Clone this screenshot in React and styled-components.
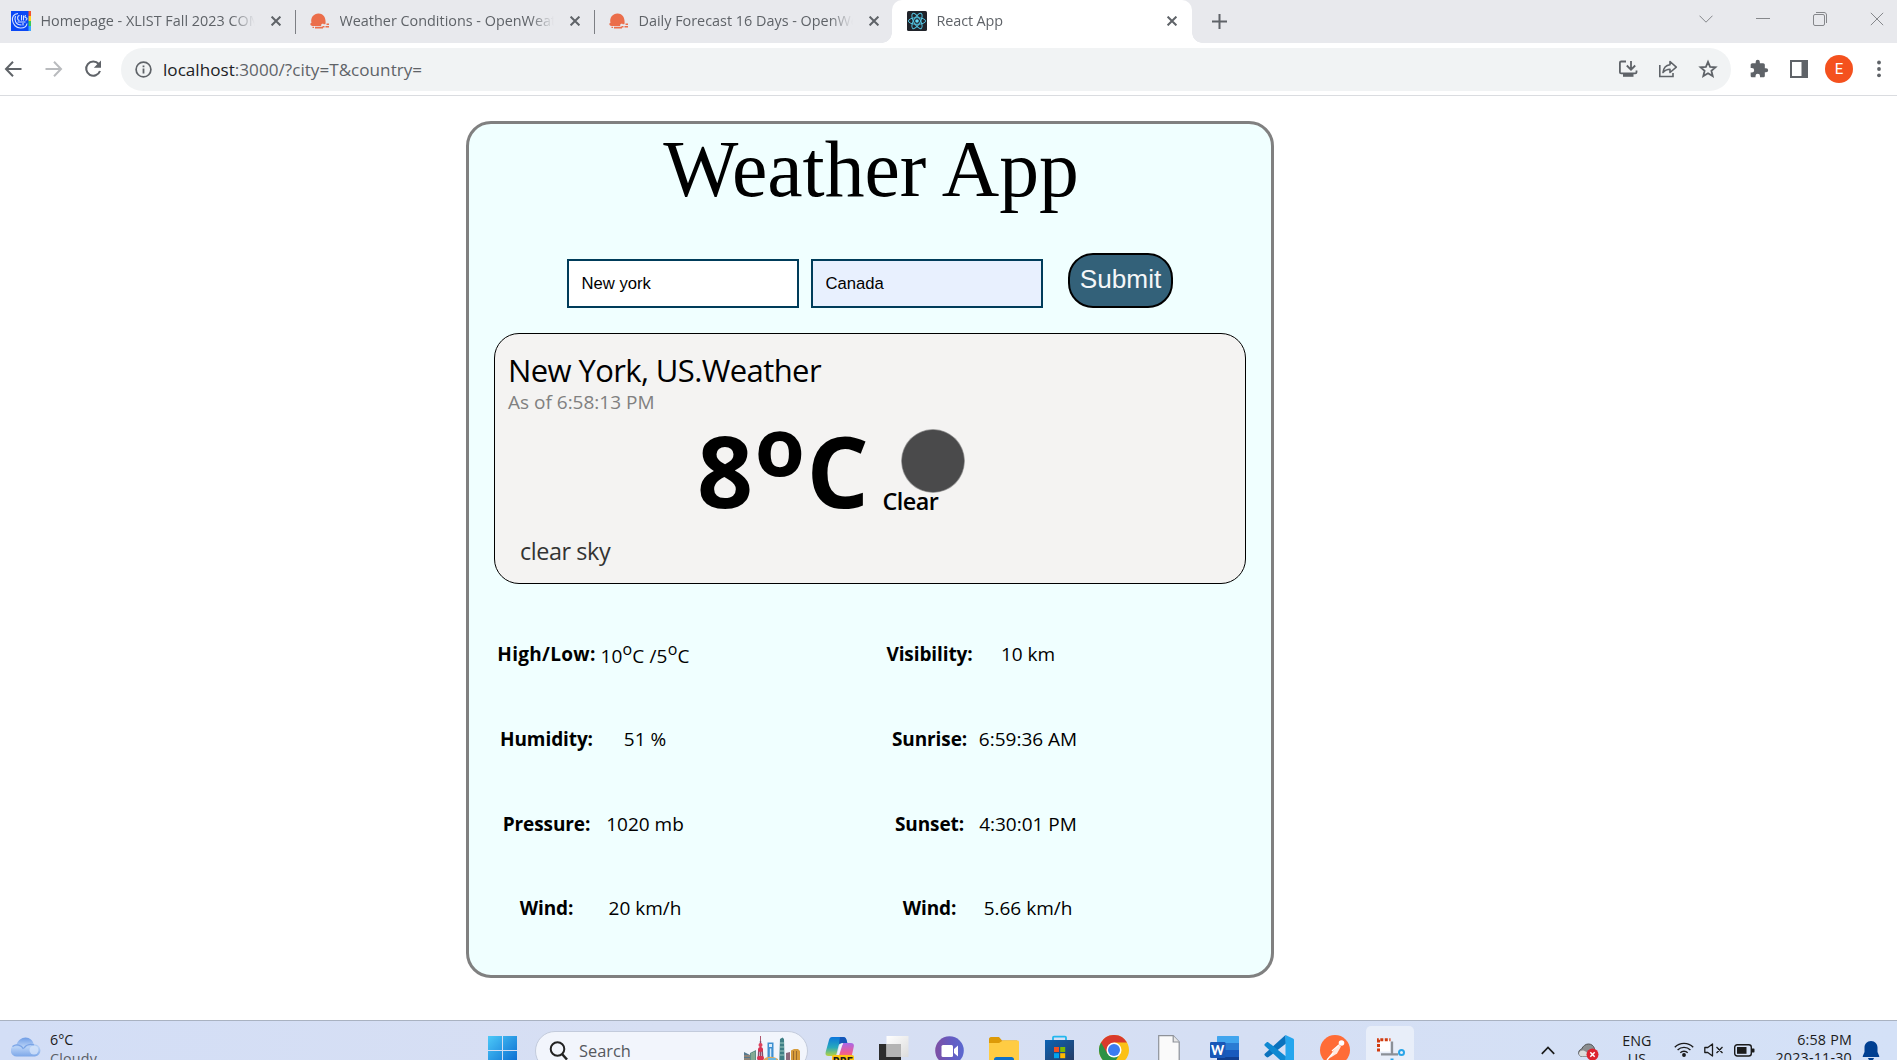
import React from "react";
import styled, { createGlobalStyle } from "styled-components";

const GlobalStyle = createGlobalStyle`
  *, *::before, *::after { box-sizing: border-box; }
  html, body { margin: 0; padding: 0; background: #fff; overflow: hidden; }
  svg { display: block; flex: none; }
`;

const ui = `"Open Sans", "Noto Sans", sans-serif`;

const Screen = styled.div`
  display: flex;
  flex-direction: column;
  width: 1897px;
  height: 1060px;
  overflow: hidden;
  background: #fff;
  font-family: ${ui};
`;

/* ---------- browser chrome ---------- */

const TabStrip = styled.div`
  display: flex;
  height: 43px;
  flex: none;
  background: #e8e9ed;
`;

const Tab = styled.div`
  position: relative;
  display: flex;
  align-items: center;
  width: ${(p) => p.$width}px;
  height: 43px;
  padding: 0 0 2px ${(p) => p.$inset}px;
  background: ${(p) => (p.$active ? "#fff" : "transparent")};
  border-radius: ${(p) => (p.$active ? "10px 10px 0 0" : "0")};
  &::before, &::after {
    content: ${(p) => (p.$active ? '""' : "none")};
    position: absolute;
    bottom: 0;
    width: 10px;
    height: 10px;
  }
  &::before { left: -10px; background: radial-gradient(circle at 0 0, transparent 9.5px, #fff 10px); }
  &::after { right: -10px; background: radial-gradient(circle at 100% 0, transparent 9.5px, #fff 10px); }
`;

const TabTitle = styled.span`
  width: 215px;
  margin-left: 9.5px;
  overflow: hidden;
  white-space: nowrap;
  font-size: 14.4px;
  letter-spacing: ${(p) => p.$track || 0}px;
  line-height: 22px;
  color: #5f6368;
  -webkit-mask-image: linear-gradient(to right, #000 190px, transparent 214px);
  mask-image: linear-gradient(to right, #000 190px, transparent 214px);
`;

const TabClose = styled.span`
  display: flex;
  margin-left: ${(p) => p.$gap || 15}px;
`;

const Separator = styled.i`
  width: 1px;
  height: 24px;
  margin-top: 10px;
  background: #7d7f84;
`;

const NewTab = styled.div`
  display: flex;
  align-items: center;
  height: 42px;
  margin-left: 20px;
`;

const WindowControls = styled.div`
  display: flex;
  align-items: center;
  gap: 43px;
  height: 37px;
  margin-left: auto;
  padding-right: 13px;
`;

const Toolbar = styled.div`
  display: flex;
  align-items: center;
  flex: none;
  height: 53px;
  border-bottom: 1px solid #dadce0;
`;

const NavButtons = styled.div`
  display: flex;
  gap: 19px;
  width: 121px;
  padding-left: 3px;
`;

const Omnibox = styled.div`
  display: flex;
  align-items: center;
  width: 1610px;
  height: 43px;
  padding: 0 13px 0 13px;
  border-radius: 22px;
  background: #f1f3f4;
`;

const Url = styled.span`
  margin-left: 10px;
  font-size: 17.1px;
  letter-spacing: 0.02px;
  color: #5f6368;
  b { font-weight: 400; color: #202124; }
`;

const OmniActions = styled.div`
  display: flex;
  align-items: center;
  gap: 20px;
  margin-left: auto;
`;

const Extensions = styled.div`
  display: flex;
  align-items: center;
  margin-left: 18px;
`;

const Avatar = styled.span`
  width: 28px;
  height: 28px;
  margin: 0 24px 0 17px;
  border-radius: 50%;
  background: #f4511e;
  color: #fff;
  font: 15px/28px Roboto, sans-serif;
  text-align: center;
`;

/* ---------- weather page ---------- */

const Page = styled.main`
  height: 924px;
  flex: none;
  padding: 25px 0 0 466px;
`;

const Card = styled.section`
  display: flex;
  flex-direction: column;
  align-items: center;
  width: 808px;
  height: 857px;
  border: 3px solid #808080;
  border-radius: 25px;
  background: #f0ffff;
`;

const Title = styled.h1`
  margin: 0;
  padding-left: 2px;
  font: 400 79.6px/90px "Liberation Serif", "Times New Roman", serif;
  color: #000;
`;

const Form = styled.form`
  display: flex;
  align-items: flex-end;
  gap: 12px;
  margin: 39px 0 25px;
`;

const Field = styled.input`
  width: 232px;
  height: 49px;
  padding: 0 12.5px;
  border: 2px solid #003c5a;
  border-radius: 0;
  outline: none;
  background: ${(p) => (p.$filled ? "#e8f0fe" : "#fff")};
  color: #000;
  font: 16.67px "Liberation Sans", Arial, sans-serif;
`;

const Submit = styled.button`
  width: 105px;
  height: 55px;
  margin-left: 13px;
  padding: 0 0 2px;
  border: 2px solid #000;
  border-radius: 25px;
  background: #336179;
  color: #f4f6f8;
  font: 26.2px/49px "Liberation Sans", Arial, sans-serif;
`;

const Panel = styled.div`
  display: flex;
  flex-direction: column;
  width: 752px;
  height: 251px;
  padding: 16px 13px 0;
  border: 1px solid #000;
  border-radius: 25px;
  background: #f4f3f2;
`;

const Place = styled.div`
  font-size: 31px;
  line-height: 40px;
  letter-spacing: -0.6px;
  color: #000;
`;

const AsOf = styled.div`
  font-size: 19px;
  line-height: 24px;
  color: #808080;
`;

const Current = styled.div`
  display: flex;
  height: 100px;
  margin: 6px 0 16px 189px;
`;

const Temperature = styled.div`
  font-size: 98px;
  font-weight: 700;
  line-height: 100px;
  letter-spacing: 1.6px;
  color: #000;
  white-space: nowrap;
  sup {
    font-size: 81px;
    line-height: 0;
    vertical-align: 32px;
  }
`;

const Condition = styled.div`
  margin-left: 12px;
  padding-top: 9px;
  font-size: 23.4px;
  font-weight: 600;
  line-height: 18px;
  letter-spacing: -0.5px;
  color: #000;
`;

const Moon = styled.div`
  width: 64px;
  height: 64px;
  margin: 0 0 -1px 19px;
  border-radius: 50%;
  background: radial-gradient(circle, #4a4a4b 30.5px, rgba(74, 74, 75, 0.3) 32px);
`;

const Summary = styled.div`
  margin-left: 12px;
  font-size: 23.4px;
  line-height: 30px;
  letter-spacing: -0.42px;
  color: #333;
`;

const Details = styled.dl`
  display: grid;
  grid-template-columns: 98px 98px 187px 98px 98px;
  grid-template-rows: repeat(4, 84.7px);
  align-items: center;
  justify-items: center;
  width: 746px;
  margin: 28px 0 0;
  padding-left: 0.5px;
  font-size: 19px;
  line-height: 24px;
  color: #000;
  white-space: nowrap;
`;

const Label = styled.dt`
  grid-column: ${(p) => p.$col};
  font-weight: 700;
  letter-spacing: ${(p) => (p.$wide ? 0.3 : -0.1)}px;
`;

const Value = styled.dd`
  grid-column: ${(p) => p.$col};
  margin: ${(p) => (p.$low ? "3px 0 0 1px" : "0 0 0 1px")};
  letter-spacing: ${(p) => (p.$low ? 0.15 : 0)}px;
  sup {
    font-size: 16px;
    line-height: 0;
    vertical-align: 8px;
  }
`;

/* ---------- taskbar ---------- */

const Taskbar = styled.footer`
  display: flex;
  flex: none;
  height: 60px;
  border-top: 1px solid #a9b2c1;
  background: linear-gradient(to right, #d3def6, #d7dff3 35%, #d5dff4 65%, #d4e1f7);
`;

const Weather = styled.div`
  display: flex;
  width: 488px;
  padding: 15px 0 0 11px;
`;

const WeatherText = styled.div`
  margin: -5px 0 0 9px;
  font-size: 14.3px;
  line-height: 18px;
  color: #1b1b1b;
  span { display: block; margin-top: 1px; color: #5b5f66; letter-spacing: 0.2px; }
`;

const StartButton = styled.div`
  width: 47px;
  padding-top: 15px;
`;

const SearchBox = styled.div`
  display: flex;
  width: 273px;
  height: 40px;
  margin-top: 10px;
  padding-left: 13px;
  border: 1px solid #c3cbdc;
  border-radius: 20px;
  background: #f2f5fc;
  color: #55585e;
  font-size: 16.4px;
  line-height: 38px;
  svg:first-child { margin-top: 9px; }
  span { width: 165px; margin-left: 11px; }
  svg:last-child { margin-top: 4px; }
`;

const Apps = styled.div`
  display: flex;
  gap: 25.4px;
  margin-left: 17px;
  padding-top: 14px;
`;

const ActiveApp = styled.div`
  width: 48px;
  height: 48px;
  margin: -9px 0 0 -9px;
  padding: 11px 0 0 11px;
  border-radius: 5px;
  background: #e8eef9;
`;

const Tray = styled.div`
  display: flex;
  margin-left: auto;
  padding: 14px 17px 0 0;
`;

const TrayItem = styled.div`
  margin: ${(p) => p.$top || 0}px 0 0 ${(p) => p.$gap || 0}px;
`;

const TrayText = styled.div`
  margin: ${(p) => p.$top}px 0 0 ${(p) => p.$gap}px;
  font-size: 14.3px;
  line-height: 18px;
  text-align: ${(p) => p.$align || "center"};
  letter-spacing: ${(p) => p.$track || 0}px;
  white-space: nowrap;
  color: #1b1b1b;
`;

/* ---------- icons ---------- */

const Cross = ({ size = 10, width = 2, color = "#5f6368" }) => (
  <svg width={size} height={size} viewBox="0 0 10 10" stroke={color} strokeWidth={(width * 10) / size}>
    <path d="M.6.6l8.8 8.8M9.4.6L.6 9.4" />
  </svg>
);

const CollegeIcon = () => (
  <svg width="20" height="20" viewBox="0 0 20 20">
    <rect width="20" height="20" fill="#0a47f5" />
    <rect x="17.5" width="2.5" height="5" fill="#f2542d" />
    <rect x="17.5" y="5" width="2.5" height="5" fill="#ffd21f" />
    <rect x="17.5" y="10" width="2.5" height="5" fill="#36c95b" />
    <rect x="17.5" y="15" width="2.5" height="5" fill="#38a8ff" />
    <g fill="none" stroke="#d8e4ff" strokeWidth="1.1">
      <path d="M7 2.500C2.500 3 1 6 1.500 9.500S5 17.500 10 17c3 0 5.500-1.500 6-4.500" />
      <path d="M4.500 5c-1.500 4 0 9 6 9M8.500 4.500c-2.500 0-2.500 5 0 5M10.500 4v5.500M12.500 4.500v5M15 4.500c-1.500 0-1.500 2 0 2.200s1.200 2.500-.5 2.500M6.500 11h8M12 12v2.500" />
    </g>
  </svg>
);

const OpenWeatherIcon = () => (
  <svg width="20" height="20" viewBox="0 0 20 20" fill="#eb6e4b">
    <path d="M8.500 2.500a7.200 7.200 0 0 0-7 9.300C.6 12 .2 12.800.4 13.600c.2.900 1 1.400 2 1.400h8.800v-1.700h4.200c.8-4-.4-10.800-6.900-10.800z" />
    <path d="M5 15.800h8v1.700H5zM12.500 15h2v1.500h-2zM15.500 15h3.500v1.600h-3.500zM16.500 12.500H19V14h-2.500zM2.500 15.800H4V17H2.500z" />
    <path d="M12 12.800h1.500v1.200H12zM14.300 13.800h1.400V15h-1.400z" fill="#e8e9ed" />
  </svg>
);

const ReactIcon = () => (
  <svg width="20" height="20" viewBox="0 0 20 20">
    <rect width="20" height="20" rx="1.500" fill="#20232a" />
    <g fill="none" stroke="#53c1de" strokeWidth="1">
      <ellipse cx="10" cy="10" rx="8.600" ry="3.300" />
      <ellipse cx="10" cy="10" rx="8.600" ry="3.300" transform="rotate(60 10 10)" />
      <ellipse cx="10" cy="10" rx="8.600" ry="3.300" transform="rotate(120 10 10)" />
    </g>
    <circle cx="10" cy="10" r="1.800" fill="#61dafb" />
  </svg>
);

const Arrow = ({ color, flip }) => (
  <svg width="21" height="20" viewBox="0 0 21 20" fill="none" stroke={color} strokeWidth="2">
    <path d={flip ? "M2.500 10h15M11 2.800L18 10l-7 7.200" : "M18.500 10h-15M10 2.800L3 10l7 7.200"} />
  </svg>
);

const Reload = () => (
  <svg width="20" height="20" viewBox="0 0 20 20">
    <path d="M15.700 5A7.100 7.100 0 1 0 17 12" fill="none" stroke="#5f6368" strokeWidth="2.100" />
    <path d="M18 1.500v7.200h-7.200z" fill="#5f6368" />
  </svg>
);

const Info = () => (
  <svg width="19" height="19" viewBox="0 0 19 19">
    <circle cx="9.500" cy="9.500" r="7.400" fill="none" stroke="#5f6368" strokeWidth="1.700" />
    <path d="M8.600 8.600h1.800v4.800H8.600zM8.600 5.500h1.800v1.800H8.600z" fill="#5f6368" />
  </svg>
);

const Install = () => (
  <svg width="20" height="20" viewBox="0 0 20 20" fill="none" stroke="#5f6368" strokeWidth="1.800">
    <path d="M8 2.500H3.200c-.8 0-1.300.5-1.300 1.300v9.400c0 .7.500 1.200 1.300 1.200h14c.8 0 1.300-.5 1.300-1.200v-1.700M13 2v8M8.800 6.500L13 10.700l4.200-4.200" />
    <path d="M5 16.300h10.500" strokeWidth="3" />
  </svg>
);

const Share = () => (
  <svg width="20" height="20" viewBox="0 0 20 20" fill="none" stroke="#5f6368" strokeWidth="1.600">
    <path d="M1.800 6v11.500H15V14" />
    <path d="M5 13.500C5.500 9 8 6.300 12 5.800V2.500l6.300 5.700L12 13.500v-3.300c-3 0-5.200 1-7 3.300z" strokeLinejoin="round" />
  </svg>
);

const Star = () => (
  <svg width="20" height="20" viewBox="0 0 20 20" fill="none" stroke="#5f6368" strokeWidth="1.800">
    <path d="M10 2.800l2.100 5 5.400.5-4.100 3.500 1.300 5.300L10 14.300l-4.700 2.800 1.300-5.300-4.100-3.500 5.400-.5z" />
  </svg>
);

const Puzzle = () => (
  <svg width="20" height="20" viewBox="0 0 24 24" fill="#5f6368">
    <path d="M20.500 11H19V7c0-1.100-.9-2-2-2h-4V3.500a2.500 2.500 0 0 0-5 0V5H4c-1.100 0-2 .9-2 2v3.800h1.500a2.700 2.700 0 0 1 0 5.400H2V20c0 1.100.9 2 2 2h3.800v-1.500a2.700 2.700 0 0 1 5.400 0V22H17c1.100 0 2-.9 2-2v-4h1.500a2.500 2.500 0 0 0 0-5z" />
  </svg>
);

const SidePanel = () => (
  <svg width="18" height="18" viewBox="0 0 18 18">
    <rect x="1" y="1" width="16" height="16" fill="#fff" stroke="#5f6368" strokeWidth="2" />
    <path d="M11.500 1H17v16h-5.500z" fill="#5f6368" />
  </svg>
);

const Dots = () => (
  <svg width="4" height="18" viewBox="0 0 4 18" fill="#5f6368">
    <circle cx="2" cy="2.500" r="1.900" /><circle cx="2" cy="9" r="1.900" /><circle cx="2" cy="15.300" r="1.900" />
  </svg>
);

const CloudIcon = () => (
  <svg width="30" height="22" viewBox="0 0 30 22">
    <defs>
      <linearGradient id="cloud" x1="0" y1="0" x2="0" y2="1">
        <stop offset="0" stopColor="#6f9de6" /><stop offset=".5" stopColor="#b9d3f7" /><stop offset="1" stopColor="#7da7e8" />
      </linearGradient>
    </defs>
    <path d="M6 20.500a6 6 0 0 1-.5-12C7 4.500 10.500 1.500 14.500 1.500c4.300 0 7.500 3 8.300 7A6 6 0 0 1 24 20.500z" fill="url(#cloud)" />
    <path d="M1.500 10.500c4-3 9-1.500 11 2.500M13 12c2-3 6-4.500 10-3" fill="none" stroke="#7aa4e6" strokeWidth="1.400" />
    <circle cx="23" cy="14" r="4.500" fill="#d4e4fa" opacity=".8" />
  </svg>
);

const WindowsIcon = () => (
  <svg width="29" height="29" viewBox="0 0 29 29">
    <defs>
      <linearGradient id="win" gradientUnits="userSpaceOnUse" x1="0" y1="0" x2="29" y2="29">
        <stop offset="0" stopColor="#4cc9f8" /><stop offset="1" stopColor="#0767cf" />
      </linearGradient>
    </defs>
    <path d="M0 0h14v14H0zM15 0h14v14H15zM0 15h14v14H0zM15 15h14v14H15z" fill="url(#win)" />
  </svg>
);

const SearchIcon = () => (
  <svg width="19" height="20" viewBox="0 0 19 20" fill="none" stroke="#222" strokeWidth="2">
    <circle cx="8.500" cy="8" r="6.800" /><path d="M13 13l5 5.500" strokeWidth="2.500" />
  </svg>
);

const Skyline = () => (
  <svg width="56" height="34" viewBox="0 0 56 34">
    <path d="M0 16l6 3v15H0z" fill="#56798f" /><path d="M0 20h6M0 23h6" stroke="#c98f62" />
    <path d="M6 17l6-3v20H6z" fill="#5e8f86" /><path d="M8 17v17M10 16v18" stroke="#a9c7a0" />
    <path d="M16.500 0v6" stroke="#b0566e" />
    <path d="M16.500 5v29M14.800 13l-1 21M18.200 13l1 21" stroke="#8b4a68" strokeWidth="1.400" />
    <circle cx="16.500" cy="9" r="2" fill="#e0405c" /><circle cx="16.500" cy="13.500" r="2.500" fill="#d83352" />
    <rect x="13" y="20" width="7" height="4" rx="2" fill="#d83352" />
    <path d="M23.500 6.500h6V22h-6z" fill="#3f8fd0" /><path d="M25 8h3v3h-3zM25.800 12.500h1.500V22h-1.500z" fill="#d9ecfa" />
    <path d="M36 3l2.500-1.500L40 3l.8 31H35z" fill="#3f7f85" /><path d="M36 7h4M36 11h4M36 15h4M36 19h4" stroke="#9ccbc2" />
    <path d="M20 23c3-3 9-3 14 0l1 11H20z" fill="#dca95c" /><path d="M24 22h8v2h-8z" fill="#6bb7e0" />
    <path d="M42 17l4-1v18h-4z" fill="#8d6a7c" />
    <path d="M47 14.500l3-1.500h4l2 2v19h-9z" fill="#d79c3b" /><path d="M49.500 15v19M52.500 15v19" stroke="#9a6a2c" />
  </svg>
);

const Copilot = () => (
  <svg width="29" height="28" viewBox="0 0 29 28">
    <defs>
      <linearGradient id="cpA" x1="0" y1="0" x2="0" y2="1">
        <stop offset="0" stopColor="#0b76dc" /><stop offset=".55" stopColor="#29a9bc" /><stop offset="1" stopColor="#b7d33f" />
      </linearGradient>
      <linearGradient id="cpB" x1="0" y1="0" x2="0" y2="1">
        <stop offset="0" stopColor="#a968e8" /><stop offset=".6" stopColor="#ef5c93" /><stop offset="1" stopColor="#f2855c" />
      </linearGradient>
    </defs>
    <path d="M7 2h11c2 0 3 1 3.500 3l.8 3H17c-2 0-3 1-3.500 3l-2 8c-.5 1.500-1.500 2-3 2H3.500C1 21 0 19.500.7 17L4 5c.5-2 1.500-3 3-3z" fill="url(#cpA)" />
    <path d="M15 2h3c2 0 3 1 3.500 3l.8 3H17l-3 1z" fill="#1556b8" />
    <path d="M18 8h8c2.500 0 3.300 1.500 2.700 4l-2 9c-.5 2-1.500 3-3 3H13z" fill="url(#cpB)" />
    <path d="M17.500 8.500c-2 0-2.700 1-3.200 3L12 20.500h1.500l3-9c.3-1 .8-2 1.800-3z" fill="#f3f1fb" />
    <rect x="7" y="20" width="22" height="12" rx="2" fill="#ffc414" />
    <text x="18" y="29.500" textAnchor="middle" fontFamily="Roboto, sans-serif" fontWeight="900" fontSize="10" letterSpacing=".5" fill="#1c1c1c">PRE</text>
  </svg>
);

const TaskView = () => (
  <svg width="30" height="28" viewBox="0 0 30 28">
    <defs>
      <linearGradient id="tv" x1="0" y1="0" x2="1" y2="1"><stop offset="0" stopColor="#fff" /><stop offset="1" stopColor="#dcdcdc" /></linearGradient>
    </defs>
    <path d="M0 9h22v19H0z" fill="#2c2c2c" />
    <path d="M7.500 1h22v21h-22z" fill="url(#tv)" />
    <path d="M7.500 9H22v13H7.500z" fill="#b4b4b4" />
  </svg>
);

const ChatIcon = () => (
  <svg width="29" height="29" viewBox="0 0 29 29">
    <defs><linearGradient id="chat" x1="0" y1="0" x2="1" y2="0"><stop offset="0" stopColor="#7e4fa3" /><stop offset=".5" stopColor="#675bc0" /><stop offset="1" stopColor="#5a68cf" /></linearGradient></defs>
    <circle cx="14.500" cy="15.500" r="14.300" fill="url(#chat)" />
    <rect x="6.500" y="10" width="11.500" height="12" rx="1.500" fill="#fff" /><path d="M19 14l4-3.500v11L19 18z" fill="#fff" />
  </svg>
);

const FolderIcon = () => (
  <svg width="30" height="28" viewBox="0 0 30 28">
    <path d="M0 4c0-1 .8-2 2-2h8l3 3.500h15V12H0z" fill="#dd9a08" />
    <path d="M0 8h10l4-2.500h14.500c1 0 1.500.7 1.500 1.500v21H0z" fill="#ffcc43" />
    <path d="M5 28v-3.500c0-1.500 1-2.500 2.500-2.500h15c1.500 0 2.500 1 2.500 2.500V28z" fill="#0e70c7" />
  </svg>
);

const StoreIcon = () => (
  <svg width="29" height="28" viewBox="0 0 29 28">
    <defs><linearGradient id="store" x1="0" y1="0" x2="1" y2="1"><stop offset="0" stopColor="#0d63b3" /><stop offset="1" stopColor="#27395f" /></linearGradient></defs>
    <path d="M8 6V2.500C8 2 8.500 1.700 9 1.700h11c.6 0 1 .3 1 .8V6" fill="none" stroke="#23b7ee" strokeWidth="1.800" />
    <path d="M0 5h29v23H0z" fill="url(#store)" />
    <path d="M9 12h5v5H9z" fill="#f25022" /><path d="M15.200 12h5v5h-5z" fill="#7fba00" />
    <path d="M9 18.200h5v5H9z" fill="#00a4ef" /><path d="M15.200 18.200h5v5h-5z" fill="#ffb900" />
  </svg>
);

const ChromeIcon = () => (
  <svg width="30" height="30" viewBox="0 0 30 30">
    <circle cx="15" cy="15" r="15" fill="#fbc116" />
    <path d="M15 15L2 7.500A15 15 0 0 0 14 30l7-11.500z" fill="#2b9246" />
    <path d="M2 7.500a15 15 0 0 1 26 0H15L8.500 18.800z" fill="#d93a2c" />
    <circle cx="15" cy="15" r="7.500" fill="#fff" /><circle cx="15" cy="15" r="6" fill="#3b7cf0" />
  </svg>
);

const FileIcon = () => (
  <svg width="22" height="30" viewBox="0 0 22 30">
    <path d="M.7.7h14.500l6 6.300v24H.7z" fill="#fafafa" stroke="#8e9299" strokeWidth="1.200" />
    <path d="M15.200.7v6.300h6" fill="#e7e7e7" stroke="#8e9299" strokeWidth="1.200" />
  </svg>
);

const WordIcon = () => (
  <svg width="29" height="28" viewBox="0 0 29 28">
    <path d="M7 2c0-.6.4-1 1-1h20c.6 0 1 .4 1 1v6H7z" fill="#41a5ee" />
    <path d="M7 8h22v7H7z" fill="#2b7cd3" /><path d="M7 15h22v7H7z" fill="#185abd" /><path d="M7 22h22v6H7z" fill="#103f91" />
    <rect y="7" width="15.500" height="16" rx="1.300" fill="#1957b7" />
    <text x="7.700" y="20" textAnchor="middle" fontFamily="Lato, sans-serif" fontWeight="900" fontSize="12.500" fill="#fff">W</text>
  </svg>
);

const CodeIcon = () => (
  <svg width="30" height="30" viewBox="0 0 30 30">
    <path d="M21.500 0L1 18.500c-.8.700-.8 1.500 0 2.200l1.500 1.400c.6.500 1.300.5 2 0L22 8.500z" fill="#0b72bd" />
    <path d="M21.500 30L1 11c-.8-.7-.8-1.500 0-2.200l1.500-1.400c.6-.5 1.300-.5 2 0L22 21.500z" fill="#1089d2" />
    <path d="M21.500 0L29 3.500c.6.300 1 .8 1 1.500v20c0 .7-.4 1.200-1 1.500L21.500 30z" fill="#25a6ee" />
  </svg>
);

const PostmanIcon = () => (
  <svg width="30" height="30" viewBox="0 0 30 30">
    <circle cx="15" cy="15" r="15" fill="#ff6c37" />
    <circle cx="21.500" cy="8" r="2.800" fill="#fff" />
    <path d="M18.500 9.500l2.500 2-4 7-7 4.500 2.500-6z" fill="#ffe9e0" />
    <path d="M13 18l-6 7M19 10l-7 6" fill="none" stroke="#fff" strokeWidth="1.400" />
  </svg>
);

const SnipIcon = () => (
  <svg width="29" height="24" viewBox="0 0 29 24" fill="none">
    <rect x="2.500" y="3" width="10.500" height="11.500" fill="#fff" />
    <path d="M1.500 14.500V2.800h12" stroke="#d13c10" strokeWidth="3" strokeDasharray="3 1.500" />
    <path d="M15 4.500v12.800h5M4 17.300h17" stroke="#8b9097" strokeWidth="2.300" />
    <circle cx="24.500" cy="15.500" r="2.500" stroke="#29a4e8" strokeWidth="2" /><path d="M15 21.500v3" stroke="#29a4e8" strokeWidth="3" />
  </svg>
);

const ChevronUp = () => (
  <svg width="14" height="9" viewBox="0 0 14 9" fill="none" stroke="#1b1b1b" strokeWidth="1.700"><path d="M.8 7.800L7 1.500l6.200 6.300" /></svg>
);

const OneDrive = () => (
  <svg width="21" height="18" viewBox="0 0 21 18">
    <path d="M4.500 13.500C1.500 13.500.7 11.300.7 9.700c0-2 1.300-3.200 3-3.700C5 3 7.500 1 10.500 1c2.600 0 5 1.500 6 4.500v8z" fill="#8b8e90" stroke="#4f5254" />
    <path d="M1 10c2-5 9-2 10 3.500H4.500C2 13.500 1 12 1 10z" fill="#dcdcdc" />
    <circle cx="14.500" cy="11.500" r="6" fill="#dc2430" /><path d="M12.300 9.300l4.400 4.400M16.700 9.300l-4.400 4.400" stroke="#fff" strokeWidth="1.500" />
  </svg>
);

const Wifi = () => (
  <svg width="20" height="15" viewBox="0 0 20 15" fill="none" stroke="#1b1b1b" strokeWidth="1.400">
    <path d="M.8 5.200a13 13 0 0 1 18.400 0M3.600 8a9 9 0 0 1 12.800 0M6.300 10.700a5.300 5.300 0 0 1 7.400 0" />
    <circle cx="10" cy="13" r="1.200" fill="#1b1b1b" />
  </svg>
);

const Muted = () => (
  <svg width="20" height="14" viewBox="0 0 20 14" fill="none" stroke="#1b1b1b" strokeWidth="1.300">
    <path d="M.8 4.500h3L8.500 1v12L3.800 9.500h-3zM12.500 4l6 6M18.500 4l-6 6" strokeLinejoin="round" />
  </svg>
);

const Battery = () => (
  <svg width="21" height="13" viewBox="0 0 21 13">
    <rect x=".7" y=".7" width="16.600" height="11.300" rx="2.500" fill="none" stroke="#1b1b1b" strokeWidth="1.400" />
    <rect x="3" y="3" width="9.500" height="6.800" fill="#1b1b1b" /><path d="M18 4.500h1.500c.8 0 1 .5 1 1v2c0 .5-.2 1-1 1H18z" fill="#1b1b1b" />
  </svg>
);

const Bell = () => (
  <svg width="18" height="20" viewBox="0 0 18 20" fill="#003f91">
    <path d="M9 0C5 0 2.500 3 2.500 6.500V11L.8 15c-.2.600 0 1 .6 1h15.200c.6 0 .8-.4.600-1L15.500 11V6.500C15.500 3 13 0 9 0zM6 17h6c-.3 1.500-1.500 2.500-3 2.500S6.300 18.500 6 17z" />
  </svg>
);

/* ---------- data ---------- */

const details = [
  [["High/Low:", <>10<sup>o</sup>C /5<sup>o</sup>C</>, true], ["Visibility:", "10 km"]],
  [["Humidity:", "51 %"], ["Sunrise:", "6:59:36 AM"]],
  [["Pressure:", "1020 mb"], ["Sunset:", "4:30:01 PM"]],
  [["Wind:", "20 km/h"], ["Wind:", "5.66 km/h"]],
];

function Browser() {
  return (
    <>
      <TabStrip>
        <Tab $width={295} $inset={11}>
          <CollegeIcon /><TabTitle>Homepage - XLIST Fall 2023 COMP</TabTitle><TabClose><Cross /></TabClose>
        </Tab>
        <Separator />
        <Tab $width={298} $inset={14}>
          <OpenWeatherIcon /><TabTitle>Weather Conditions - OpenWeatherMap</TabTitle><TabClose><Cross /></TabClose>
        </Tab>
        <Separator />
        <Tab $width={297} $inset={14}>
          <OpenWeatherIcon /><TabTitle>Daily Forecast 16 Days - OpenWeatherMap</TabTitle><TabClose><Cross /></TabClose>
        </Tab>
        <Tab $width={300} $inset={15} $active>
          <ReactIcon /><TabTitle $track={-0.1}>React App</TabTitle><TabClose $gap={15.5}><Cross /></TabClose>
        </Tab>
        <NewTab>
          <svg width="15" height="15" viewBox="0 0 15 15" stroke="#5f6368" strokeWidth="2"><path d="M0 7.500h15M7.500 0v15" /></svg>
        </NewTab>
        <WindowControls>
          <svg width="14" height="8" viewBox="0 0 14 8" fill="none" stroke="#85878b"><path d="M.5.7L7 7.200 13.500.7" /></svg>
          <svg width="14" height="2" viewBox="0 0 14 2" fill="#85878b"><path d="M0 0h14v1H0z" /></svg>
          <svg width="14" height="14" viewBox="0 0 14 14" fill="none" stroke="#85878b">
            <rect x=".5" y="2.500" width="11" height="11" rx="1.500" /><path d="M3 .5h8c1.500 0 2.500 1 2.500 2.500v8" />
          </svg>
          <Cross size={14} width={1} color="#85878b" />
        </WindowControls>
      </TabStrip>
      <Toolbar>
        <NavButtons><Arrow color="#5f6368" /><Arrow color="#b9bbbe" flip /><Reload /></NavButtons>
        <Omnibox>
          <Info />
          <Url><b>localhost</b>:3000/?city=T&amp;country=</Url>
          <OmniActions><Install /><Share /><Star /></OmniActions>
        </Omnibox>
        <Extensions>
          <Puzzle />
          <TrayItem $gap={21}><SidePanel /></TrayItem>
          <Avatar>E</Avatar>
          <Dots />
        </Extensions>
      </Toolbar>
    </>
  );
}

function WeatherCard() {
  return (
    <Card>
      <Title>Weather App</Title>
      <Form onSubmit={(e) => e.preventDefault()}>
        <Field name="city" defaultValue="New york" />
        <Field name="country" defaultValue="Canada" $filled />
        <Submit>Submit</Submit>
      </Form>
      <Panel>
        <Place>New York, US.Weather</Place>
        <AsOf>As of 6:58:13 PM</AsOf>
        <Current>
          <Temperature>8<sup>o</sup>C</Temperature>
          <Condition><Moon />Clear</Condition>
        </Current>
        <Summary>clear sky</Summary>
      </Panel>
      <Details>
        {details.map((row, r) =>
          row.map(([label, value, low], c) => (
            <React.Fragment key={`${r}-${c}`}>
              <Label $col={c * 3 + 1} $wide={low}>{label}</Label>
              <Value $col={c * 3 + 2} $low={low}>{value}</Value>
            </React.Fragment>
          ))
        )}
      </Details>
    </Card>
  );
}

function WindowsTaskbar() {
  return (
    <Taskbar>
      <Weather>
        <CloudIcon />
        <WeatherText>6°C<span>Cloudy</span></WeatherText>
      </Weather>
      <StartButton><WindowsIcon /></StartButton>
      <SearchBox><SearchIcon /><span>Search</span><Skyline /></SearchBox>
      <Apps>
        <Copilot /><TaskView /><ChatIcon /><FolderIcon /><StoreIcon /><ChromeIcon />
        <TrayItem $gap={4}><FileIcon /></TrayItem>
        <TrayItem $gap={4}><WordIcon /></TrayItem>
        <CodeIcon /><PostmanIcon />
        <ActiveApp><SnipIcon /></ActiveApp>
      </Apps>
      <Tray>
        <TrayItem $top={11}><ChevronUp /></TrayItem>
        <TrayItem $top={8} $gap={23}><OneDrive /></TrayItem>
        <TrayText $top={-3} $gap={23}>ENG<br />US</TrayText>
        <TrayItem $top={7} $gap={23}><Wifi /></TrayItem>
        <TrayItem $top={8} $gap={10}><Muted /></TrayItem>
        <TrayItem $top={9} $gap={10}><Battery /></TrayItem>
        <TrayText $top={-4} $gap={20} $align="right" $track={0.2}>6:58 PM<br />2023-11-30</TrayText>
        <TrayItem $top={6} $gap={10}><Bell /></TrayItem>
      </Tray>
    </Taskbar>
  );
}

export default function App() {
  return (
    <Screen>
      <GlobalStyle />
      <Browser />
      <Page><WeatherCard /></Page>
      <WindowsTaskbar />
    </Screen>
  );
}
